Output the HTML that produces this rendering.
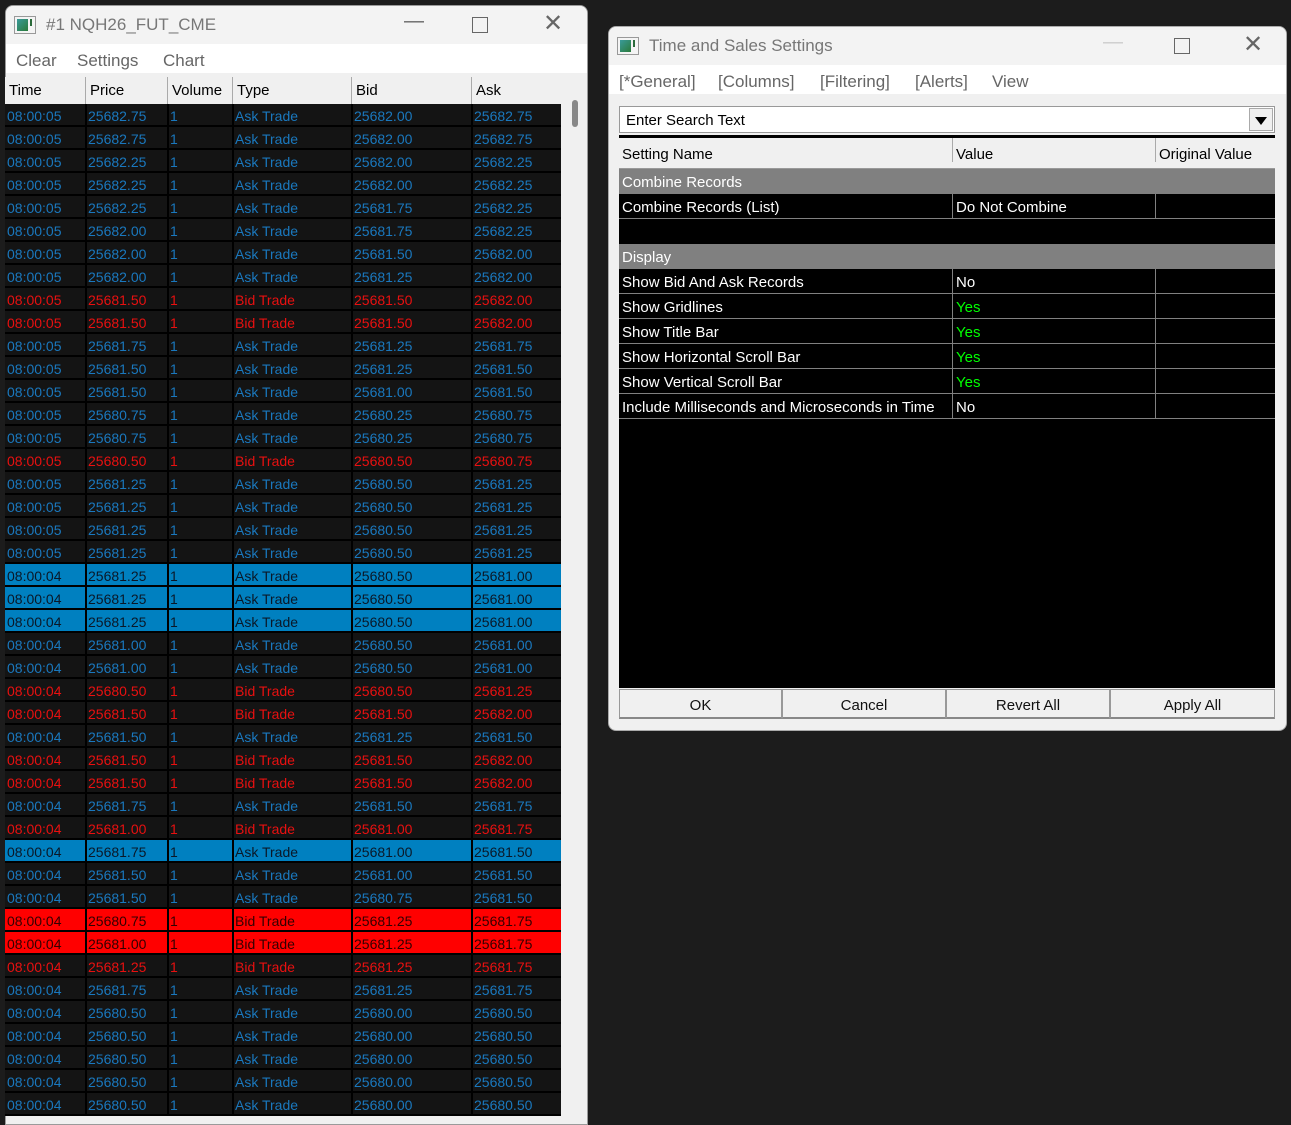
<!DOCTYPE html>
<html><head><meta charset="utf-8"><style>
*{box-sizing:border-box;margin:0;padding:0}
body{width:1291px;height:1111px;background:#1c1c1c;position:relative;overflow:hidden;font-family:"Liberation Sans",sans-serif;font-size:14px}
.win{position:absolute;background:#f0f0f0;border:1px solid #9a9a9a;border-radius:8px 8px 0 0;overflow:hidden}
.title{position:absolute;left:0;right:0;top:0;height:38px;background:#f3f3f3;color:#777;font-size:17px}
.title .t{position:absolute;left:40px;top:9px}
.ico{position:absolute;left:8px;top:10px;width:22px;height:18px;border:1px solid #999;background:#f4f4f4}
.ico:before{content:"";position:absolute;left:2px;top:2px;width:11px;height:12px;background:linear-gradient(135deg,#3a9a9a,#2a7a3a)}
.ico:after{content:"";position:absolute;left:15px;top:2px;width:2px;height:7px;background:#2a6a3a}
.ctl{position:absolute;top:6px;color:#666;font-size:20px}
.menu{position:absolute;left:0;right:0;top:38px;height:29px;background:#fff;color:#666;font-size:17px}
.menu span{position:absolute;top:7px}
.hdr{position:absolute;display:flex;height:27px;background:#f0f0f0;color:#000;font-size:15px}
.hdr i{font-style:normal;border-left:1px solid #aaa;padding:5px 4px 0;height:27px}
.rows{position:absolute;left:5px;top:104px;width:556px}
.r{display:flex;height:23px;background:#141414;border-bottom:2px solid #000}
.r i{font-style:normal;border-left:2px solid #000;padding:4px 0 0 1px;height:21px;white-space:nowrap;font-size:14px}
.r i:first-child{border-left:none;padding-left:2px}
.w1{width:80px}.w2{width:82px}.w3{width:65px}.w4{width:119px}.w5{width:120px}.w6{width:90px}
.A{color:#1a78be}.B{color:#e81010}
.HA{background:#0080c0;color:#0a1828}.HB{background:#ff0000;color:#300}
.st{position:absolute;left:10px;width:656px;font-size:15px;color:#fff}
.sr{display:flex;height:25px;border-bottom:1px solid #808080;background:#000}
.sr i{font-style:normal;padding:5px 3px 0;height:24px;white-space:nowrap}
.sr i+i{border-left:1px solid #808080}
.g{background:#808080}
.btn{position:absolute;top:662px;height:30px;background:#f0f0f0;border:1px solid #999;border-bottom:2px solid #888;text-align:center;padding-top:7px;font-size:15px;color:#111}
</style></head><body>

<div class="win" style="left:5px;top:5px;width:583px;height:1120px">
 <div class="title"><div class="ico"></div><span class="t">#1 NQH26_FUT_CME</span>
  <span class="ctl" style="left:398px;top:4px">—</span><span class="ctl" style="left:466px;width:16px;height:16px;border:1.5px solid #666;top:11px"></span><span class="ctl" style="left:537px;top:3px;font-size:24px">✕</span></div>
 <div class="menu"><span style="left:10px">Clear</span><span style="left:71px">Settings</span><span style="left:157px">Chart</span></div>
 <div style="position:absolute;left:566px;top:94px;width:6px;height:27px;background:#888;border-radius:3px"></div>
</div>
<div class="hdr" style="left:5px;top:77px;width:556px">
 <i class="w1" style="border:none">Time</i><i class="w2">Price</i><i class="w3">Volume</i><i class="w4">Type</i><i class="w5">Bid</i><i class="w6">Ask</i>
</div>
<div class="rows">
<div class="r A"><i class="w1">08:00:05</i><i class="w2">25682.75</i><i class="w3">1</i><i class="w4">Ask Trade</i><i class="w5">25682.00</i><i class="w6">25682.75</i></div>
<div class="r A"><i class="w1">08:00:05</i><i class="w2">25682.75</i><i class="w3">1</i><i class="w4">Ask Trade</i><i class="w5">25682.00</i><i class="w6">25682.75</i></div>
<div class="r A"><i class="w1">08:00:05</i><i class="w2">25682.25</i><i class="w3">1</i><i class="w4">Ask Trade</i><i class="w5">25682.00</i><i class="w6">25682.25</i></div>
<div class="r A"><i class="w1">08:00:05</i><i class="w2">25682.25</i><i class="w3">1</i><i class="w4">Ask Trade</i><i class="w5">25682.00</i><i class="w6">25682.25</i></div>
<div class="r A"><i class="w1">08:00:05</i><i class="w2">25682.25</i><i class="w3">1</i><i class="w4">Ask Trade</i><i class="w5">25681.75</i><i class="w6">25682.25</i></div>
<div class="r A"><i class="w1">08:00:05</i><i class="w2">25682.00</i><i class="w3">1</i><i class="w4">Ask Trade</i><i class="w5">25681.75</i><i class="w6">25682.25</i></div>
<div class="r A"><i class="w1">08:00:05</i><i class="w2">25682.00</i><i class="w3">1</i><i class="w4">Ask Trade</i><i class="w5">25681.50</i><i class="w6">25682.00</i></div>
<div class="r A"><i class="w1">08:00:05</i><i class="w2">25682.00</i><i class="w3">1</i><i class="w4">Ask Trade</i><i class="w5">25681.25</i><i class="w6">25682.00</i></div>
<div class="r B"><i class="w1">08:00:05</i><i class="w2">25681.50</i><i class="w3">1</i><i class="w4">Bid Trade</i><i class="w5">25681.50</i><i class="w6">25682.00</i></div>
<div class="r B"><i class="w1">08:00:05</i><i class="w2">25681.50</i><i class="w3">1</i><i class="w4">Bid Trade</i><i class="w5">25681.50</i><i class="w6">25682.00</i></div>
<div class="r A"><i class="w1">08:00:05</i><i class="w2">25681.75</i><i class="w3">1</i><i class="w4">Ask Trade</i><i class="w5">25681.25</i><i class="w6">25681.75</i></div>
<div class="r A"><i class="w1">08:00:05</i><i class="w2">25681.50</i><i class="w3">1</i><i class="w4">Ask Trade</i><i class="w5">25681.25</i><i class="w6">25681.50</i></div>
<div class="r A"><i class="w1">08:00:05</i><i class="w2">25681.50</i><i class="w3">1</i><i class="w4">Ask Trade</i><i class="w5">25681.00</i><i class="w6">25681.50</i></div>
<div class="r A"><i class="w1">08:00:05</i><i class="w2">25680.75</i><i class="w3">1</i><i class="w4">Ask Trade</i><i class="w5">25680.25</i><i class="w6">25680.75</i></div>
<div class="r A"><i class="w1">08:00:05</i><i class="w2">25680.75</i><i class="w3">1</i><i class="w4">Ask Trade</i><i class="w5">25680.25</i><i class="w6">25680.75</i></div>
<div class="r B"><i class="w1">08:00:05</i><i class="w2">25680.50</i><i class="w3">1</i><i class="w4">Bid Trade</i><i class="w5">25680.50</i><i class="w6">25680.75</i></div>
<div class="r A"><i class="w1">08:00:05</i><i class="w2">25681.25</i><i class="w3">1</i><i class="w4">Ask Trade</i><i class="w5">25680.50</i><i class="w6">25681.25</i></div>
<div class="r A"><i class="w1">08:00:05</i><i class="w2">25681.25</i><i class="w3">1</i><i class="w4">Ask Trade</i><i class="w5">25680.50</i><i class="w6">25681.25</i></div>
<div class="r A"><i class="w1">08:00:05</i><i class="w2">25681.25</i><i class="w3">1</i><i class="w4">Ask Trade</i><i class="w5">25680.50</i><i class="w6">25681.25</i></div>
<div class="r A"><i class="w1">08:00:05</i><i class="w2">25681.25</i><i class="w3">1</i><i class="w4">Ask Trade</i><i class="w5">25680.50</i><i class="w6">25681.25</i></div>
<div class="r HA"><i class="w1">08:00:04</i><i class="w2">25681.25</i><i class="w3">1</i><i class="w4">Ask Trade</i><i class="w5">25680.50</i><i class="w6">25681.00</i></div>
<div class="r HA"><i class="w1">08:00:04</i><i class="w2">25681.25</i><i class="w3">1</i><i class="w4">Ask Trade</i><i class="w5">25680.50</i><i class="w6">25681.00</i></div>
<div class="r HA"><i class="w1">08:00:04</i><i class="w2">25681.25</i><i class="w3">1</i><i class="w4">Ask Trade</i><i class="w5">25680.50</i><i class="w6">25681.00</i></div>
<div class="r A"><i class="w1">08:00:04</i><i class="w2">25681.00</i><i class="w3">1</i><i class="w4">Ask Trade</i><i class="w5">25680.50</i><i class="w6">25681.00</i></div>
<div class="r A"><i class="w1">08:00:04</i><i class="w2">25681.00</i><i class="w3">1</i><i class="w4">Ask Trade</i><i class="w5">25680.50</i><i class="w6">25681.00</i></div>
<div class="r B"><i class="w1">08:00:04</i><i class="w2">25680.50</i><i class="w3">1</i><i class="w4">Bid Trade</i><i class="w5">25680.50</i><i class="w6">25681.25</i></div>
<div class="r B"><i class="w1">08:00:04</i><i class="w2">25681.50</i><i class="w3">1</i><i class="w4">Bid Trade</i><i class="w5">25681.50</i><i class="w6">25682.00</i></div>
<div class="r A"><i class="w1">08:00:04</i><i class="w2">25681.50</i><i class="w3">1</i><i class="w4">Ask Trade</i><i class="w5">25681.25</i><i class="w6">25681.50</i></div>
<div class="r B"><i class="w1">08:00:04</i><i class="w2">25681.50</i><i class="w3">1</i><i class="w4">Bid Trade</i><i class="w5">25681.50</i><i class="w6">25682.00</i></div>
<div class="r B"><i class="w1">08:00:04</i><i class="w2">25681.50</i><i class="w3">1</i><i class="w4">Bid Trade</i><i class="w5">25681.50</i><i class="w6">25682.00</i></div>
<div class="r A"><i class="w1">08:00:04</i><i class="w2">25681.75</i><i class="w3">1</i><i class="w4">Ask Trade</i><i class="w5">25681.50</i><i class="w6">25681.75</i></div>
<div class="r B"><i class="w1">08:00:04</i><i class="w2">25681.00</i><i class="w3">1</i><i class="w4">Bid Trade</i><i class="w5">25681.00</i><i class="w6">25681.75</i></div>
<div class="r HA"><i class="w1">08:00:04</i><i class="w2">25681.75</i><i class="w3">1</i><i class="w4">Ask Trade</i><i class="w5">25681.00</i><i class="w6">25681.50</i></div>
<div class="r A"><i class="w1">08:00:04</i><i class="w2">25681.50</i><i class="w3">1</i><i class="w4">Ask Trade</i><i class="w5">25681.00</i><i class="w6">25681.50</i></div>
<div class="r A"><i class="w1">08:00:04</i><i class="w2">25681.50</i><i class="w3">1</i><i class="w4">Ask Trade</i><i class="w5">25680.75</i><i class="w6">25681.50</i></div>
<div class="r HB"><i class="w1">08:00:04</i><i class="w2">25680.75</i><i class="w3">1</i><i class="w4">Bid Trade</i><i class="w5">25681.25</i><i class="w6">25681.75</i></div>
<div class="r HB"><i class="w1">08:00:04</i><i class="w2">25681.00</i><i class="w3">1</i><i class="w4">Bid Trade</i><i class="w5">25681.25</i><i class="w6">25681.75</i></div>
<div class="r B"><i class="w1">08:00:04</i><i class="w2">25681.25</i><i class="w3">1</i><i class="w4">Bid Trade</i><i class="w5">25681.25</i><i class="w6">25681.75</i></div>
<div class="r A"><i class="w1">08:00:04</i><i class="w2">25681.75</i><i class="w3">1</i><i class="w4">Ask Trade</i><i class="w5">25681.25</i><i class="w6">25681.75</i></div>
<div class="r A"><i class="w1">08:00:04</i><i class="w2">25680.50</i><i class="w3">1</i><i class="w4">Ask Trade</i><i class="w5">25680.00</i><i class="w6">25680.50</i></div>
<div class="r A"><i class="w1">08:00:04</i><i class="w2">25680.50</i><i class="w3">1</i><i class="w4">Ask Trade</i><i class="w5">25680.00</i><i class="w6">25680.50</i></div>
<div class="r A"><i class="w1">08:00:04</i><i class="w2">25680.50</i><i class="w3">1</i><i class="w4">Ask Trade</i><i class="w5">25680.00</i><i class="w6">25680.50</i></div>
<div class="r A"><i class="w1">08:00:04</i><i class="w2">25680.50</i><i class="w3">1</i><i class="w4">Ask Trade</i><i class="w5">25680.00</i><i class="w6">25680.50</i></div>
<div class="r A"><i class="w1">08:00:04</i><i class="w2">25680.50</i><i class="w3">1</i><i class="w4">Ask Trade</i><i class="w5">25680.00</i><i class="w6">25680.50</i></div>
</div>

<div class="win" style="left:608px;top:26px;width:679px;height:705px;border-radius:8px;border-color:#aaa">
 <div class="title"><div class="ico"></div><span class="t">Time and Sales Settings</span>
  <span class="ctl" style="left:494px;top:4px;color:#ccc">—</span><span class="ctl" style="left:565px;width:16px;height:16px;border:1.5px solid #666;top:11px"></span><span class="ctl" style="left:634px;top:3px;font-size:24px">✕</span></div>
 <div class="menu"><span style="left:10px">[*General]</span><span style="left:109px">[Columns]</span><span style="left:211px">[Filtering]</span><span style="left:306px">[Alerts]</span><span style="left:383px">View</span></div>
 <div style="position:absolute;left:10px;top:79px;width:656px;height:27px;background:#fff;border:1px solid #999;font-size:15px;color:#000;padding:5px 6px">Enter Search Text
  <div style="position:absolute;right:1px;top:1px;width:24px;height:23px;background:#f0f0f0;border:1px solid #aaa"><div style="position:absolute;left:5px;top:8px;border-left:6px solid transparent;border-right:6px solid transparent;border-top:8px solid #000"></div></div></div>
 <div style="position:absolute;left:10px;top:108px;width:656px;height:3px;background:#000"></div>
 <div class="st" style="top:111px;height:550px;background:#000">
  <div class="sr" style="background:#f0f0f0;color:#000;height:31px;border-bottom:1px solid #999"><i style="width:333px;padding-top:8px">Setting Name</i><i style="width:203px;padding-top:8px;border-color:#aaa">Value</i><i style="width:120px;padding-top:8px;border-color:#aaa">Original Value</i></div>
  <div class="sr g"><i>Combine Records</i></div>
  <div class="sr"><i style="width:333px">Combine Records (List)</i><i style="width:203px">Do Not Combine</i><i style="width:120px"></i></div>
  <div class="sr" style="border-bottom:none"><i></i></div>
  <div class="sr g"><i>Display</i></div>
  <div class="sr"><i style="width:333px">Show Bid And Ask Records</i><i style="width:203px">No</i><i style="width:120px"></i></div>
  <div class="sr"><i style="width:333px">Show Gridlines</i><i style="width:203px;color:#0f0">Yes</i><i style="width:120px"></i></div>
  <div class="sr"><i style="width:333px">Show Title Bar</i><i style="width:203px;color:#0f0">Yes</i><i style="width:120px"></i></div>
  <div class="sr"><i style="width:333px">Show Horizontal Scroll Bar</i><i style="width:203px;color:#0f0">Yes</i><i style="width:120px"></i></div>
  <div class="sr"><i style="width:333px">Show Vertical Scroll Bar</i><i style="width:203px;color:#0f0">Yes</i><i style="width:120px"></i></div>
  <div class="sr"><i style="width:333px">Include Milliseconds and Microseconds in Time</i><i style="width:203px">No</i><i style="width:120px"></i></div>
 </div>
 <div class="btn" style="left:10px;width:163px">OK</div>
 <div class="btn" style="left:173px;width:164px">Cancel</div>
 <div class="btn" style="left:337px;width:164px">Revert All</div>
 <div class="btn" style="left:501px;width:165px">Apply All</div>
</div>
</body></html>
